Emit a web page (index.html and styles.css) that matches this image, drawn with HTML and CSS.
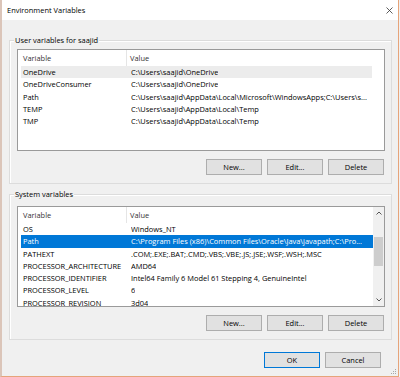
FILE: index.html
```html
<!DOCTYPE html>
<html lang="en">
<head>
  <meta charset="UTF-8" />
  <title>Environment Variables</title>
  <link rel="stylesheet" href="styles.css">
</head>
<body>
  <div class="window">
    <div class="titlebar">
      <span class="title">Environment Variables</span>
      <svg class="close" width="7" height="7" viewBox="0 0 7 7">
        <path d="M0.5 0.5 L6.5 6.5 M6.5 0.5 L0.5 6.5" stroke="#333" stroke-width="0.8" fill="none" />
      </svg>
    </div>

    <div class="content">
      <div class="group group-user">
        <span class="group-label">User variables for saajid</span>
        <div class="list list-user">
          <div class="list-main">
            <div class="list-head">
              <span class="head-var">Variable</span>
              <span class="head-val">Value</span>
            </div>
            <div class="rows">
              <div class="row hover"><span class="col-var">OneDrive</span><span class="col-val">C:\Users\saajid\OneDrive</span></div>
              <div class="row"><span class="col-var">OneDriveConsumer</span><span class="col-val">C:\Users\saajid\OneDrive</span></div>
              <div class="row"><span class="col-var">Path</span><span class="col-val">C:\Users\saajid\AppData\Local\Microsoft\WindowsApps;C:\Users\s...</span></div>
              <div class="row"><span class="col-var">TEMP</span><span class="col-val">C:\Users\saajid\AppData\Local\Temp</span></div>
              <div class="row"><span class="col-var">TMP</span><span class="col-val">C:\Users\saajid\AppData\Local\Temp</span></div>
            </div>
          </div>
        </div>
        <div class="buttons">
          <button class="btn">New...</button>
          <button class="btn">Edit...</button>
          <button class="btn">Delete</button>
        </div>
      </div>

      <div class="group group-system">
        <span class="group-label">System variables</span>
        <div class="list list-system">
          <div class="list-main">
            <div class="list-head">
              <span class="head-var">Variable</span>
              <span class="head-val">Value</span>
            </div>
            <div class="rows">
              <div class="row"><span class="col-var">OS</span><span class="col-val">Windows_NT</span></div>
              <div class="row selected"><span class="col-var">Path</span><span class="col-val">C:\Program Files (x86)\Common Files\Oracle\Java\javapath;C:\Pro...</span></div>
              <div class="row"><span class="col-var">PATHEXT</span><span class="col-val">.COM;.EXE;.BAT;.CMD;.VBS;.VBE;.JS;.JSE;.WSF;.WSH;.MSC</span></div>
              <div class="row"><span class="col-var">PROCESSOR_ARCHITECTURE</span><span class="col-val">AMD64</span></div>
              <div class="row"><span class="col-var">PROCESSOR_IDENTIFIER</span><span class="col-val">Intel64 Family 6 Model 61 Stepping 4, GenuineIntel</span></div>
              <div class="row"><span class="col-var">PROCESSOR_LEVEL</span><span class="col-val">6</span></div>
              <div class="row"><span class="col-var">PROCESSOR_REVISION</span><span class="col-val">3d04</span></div>
            </div>
          </div>
          <div class="scrollbar">
            <div class="arrow">
              <svg width="6" height="4" viewBox="0 0 6 4"><path d="M0.5 3.5 L3 1 L5.5 3.5" stroke="#555" stroke-width="1" fill="none" /></svg>
            </div>
            <div class="track">
              <div class="thumb"></div>
            </div>
            <div class="arrow">
              <svg width="6" height="4" viewBox="0 0 6 4"><path d="M0.5 0.5 L3 3 L5.5 0.5" stroke="#555" stroke-width="1" fill="none" /></svg>
            </div>
          </div>
        </div>
        <div class="buttons">
          <button class="btn">New...</button>
          <button class="btn">Edit...</button>
          <button class="btn">Delete</button>
        </div>
      </div>

      <div class="dialog-buttons">
        <button class="btn btn-default">OK</button>
        <button class="btn">Cancel</button>
      </div>
    </div>

    <svg class="grip" width="7" height="7" viewBox="0 0 7 7">
      <rect x="5" y="1" width="1" height="1" fill="#a8a8a8" />
      <rect x="3" y="3" width="1" height="1" fill="#a8a8a8" />
      <rect x="5" y="3" width="1" height="1" fill="#a8a8a8" />
      <rect x="1" y="5" width="1" height="1" fill="#a8a8a8" />
      <rect x="3" y="5" width="1" height="1" fill="#a8a8a8" />
      <rect x="5" y="5" width="1" height="1" fill="#a8a8a8" />
    </svg>
  </div>
</body>
</html>
```

FILE: styles.css
```css
:root {
  --face: #f0f0f0;
  --frame: #e6a47a;
  --edge: #dbc5b9;
  --group-line: #dcdcdc;
  --list-line: #9a9a9a;
  --select: #0078d7;
  --hover: #ececec;
  --btn-bg: #e1e1e1;
  --btn-line: #adadad;
  --text: #000;
}

* {
  box-sizing: border-box;
  margin: 0;
  padding: 0;
}

html {
  background: var(--face);
}

body {
  font-family: 'Open Sans', 'Noto Sans', sans-serif;
  font-size: 7.45px;
  color: var(--text);
}

.window {
  position: relative;
  width: 399px;
  height: 377px;
  background: var(--face);
  border-left: 2px solid var(--edge);
  border-right: 1px solid var(--frame);
  border-bottom: 1px solid var(--frame);
  display: flex;
  flex-direction: column;
}

.titlebar {
  height: 20px;
  background: #fff;
  display: flex;
  align-items: center;
  justify-content: space-between;
  padding: 0 5px 0 5px;
}

.title {
  color: #000;
}

.close {
  display: block;
}

.content {
  padding: 20px 6px 0 7px;
  display: flex;
  flex-direction: column;
}

.group {
  position: relative;
  border: 1px solid var(--group-line);
  box-shadow: inset 1px 1px 0 #fff;
  padding: 8px 6px 8px 7px;
}

.group-system {
  margin-top: 10px;
  padding-top: 11px;
}

.group-label {
  position: absolute;
  top: -6.5px;
  left: 4px;
  padding: 0 1px;
  line-height: 11px;
  background: var(--face);
  color: #000;
}

.list {
  display: flex;
  background: #fff;
  border: 1px solid var(--list-line);
  overflow: hidden;
}

.list-user {
  height: 102px;
}

.list-system {
  height: 101px;
}

.list-main {
  flex: 1;
  min-width: 0;
}

.list-user .list-main {
  padding-right: 12px;
}

.list-head {
  height: 16px;
  display: flex;
  align-items: center;
  color: #333;
}

.head-var {
  width: 109px;
  height: 100%;
  display: flex;
  align-items: center;
  padding-left: 5px;
  border-right: 1px solid #e5e5e5;
}

.head-val {
  padding-left: 3px;
}

.row {
  display: flex;
  height: 12.25px;
  line-height: 12.25px;
  margin-left: 3px;
  padding-left: 2px;
  white-space: nowrap;
}

.row.hover {
  background: var(--hover);
}

.row.selected {
  background: var(--select);
  color: #fff;
}

.col-var {
  width: 108px;
  flex-shrink: 0;
}

.col-val {
  overflow: hidden;
}

.scrollbar {
  width: 11px;
  background: var(--face);
  display: flex;
  flex-direction: column;
}

.arrow {
  height: 12px;
  display: flex;
  align-items: center;
  justify-content: center;
}

.arrow svg {
  display: block;
}

.track {
  flex: 1;
  padding: 18px 1px 0 1px;
}

.thumb {
  height: 29px;
  background: #cdcdcd;
}

.buttons {
  display: flex;
  justify-content: flex-end;
  gap: 5px;
  margin-top: 8px;
  padding-right: 1px;
}

.btn {
  width: 56px;
  height: 16px;
  font: inherit;
  color: #000;
  background: var(--btn-bg);
  border: 1px solid var(--btn-line);
}

.btn-default {
  border-color: var(--select);
}

.dialog-buttons {
  display: flex;
  justify-content: flex-end;
  gap: 5px;
  margin-top: 12px;
  padding-right: 11px;
}

.grip {
  position: absolute;
  right: 1px;
  bottom: 1px;
}
```
